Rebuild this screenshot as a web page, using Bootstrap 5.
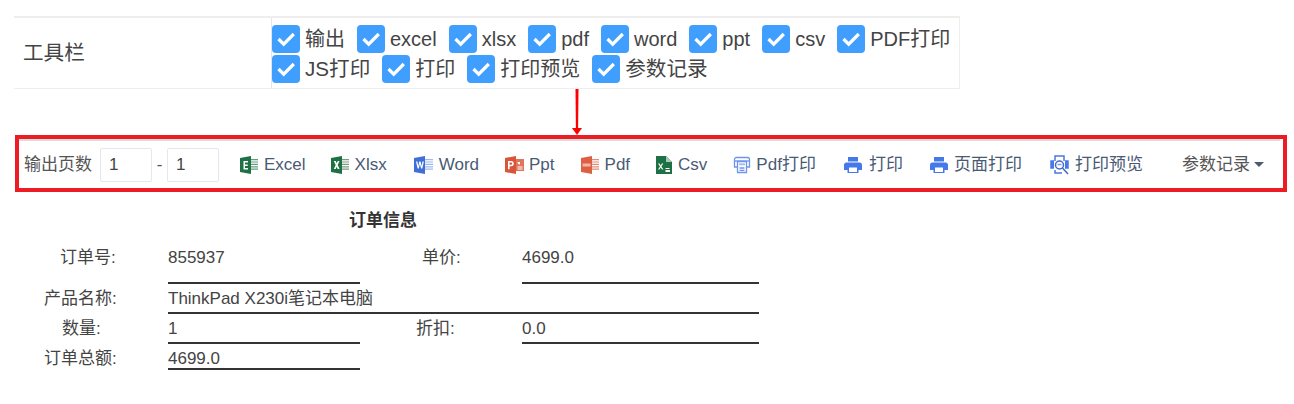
<!DOCTYPE html>
<html lang="zh">
<head>
    <meta charset="UTF-8">
    <meta name="viewport" content="width=device-width, initial-scale=1.0">
    <title>工具栏</title>
    <link href="https://cdn.jsdelivr.net/npm/bootstrap@5.3.2/dist/css/bootstrap.min.css" rel="stylesheet">
    <style>
        body {
            background: #fff;
            color: #444;
            font-family: "Liberation Sans", "Noto Sans CJK SC", sans-serif;
            overflow: hidden;
        }
        /* 上方配置表格 */
        .cfg-table {
            width: 946px;
            height: 73px;
            margin: 16px 0 0 14px;
            border-top: 2px solid #eee;
            border-bottom: 1px solid #eee;
            border-right: 1px solid #eee;
        }
        .cfg-title {
            width: 258px;
            padding-left: 9px;
            font-size: 20.6px;
            border-right: 1px solid #e6e6e6;
        }
        .cfg-checks {
            width: 687px;
            padding-top: 7px;
            row-gap: 2px;
            column-gap: 12px;
        }
        .cfg-item {
            font-size: 20px;
            line-height: 28px;
            color: #444;
            gap: 5px;
        }
        .cfg-wide { font-size: 20.6px; }
        .cfg-item .form-check-input {
            width: 28px;
            height: 28px;
            margin: 0;
            border: 0;
            border-radius: 4px;
            background-color: #409eff;
            background-image: url("data:image/svg+xml,%3csvg xmlns='http://www.w3.org/2000/svg' viewBox='0 0 28 28'%3e%3cpath fill='none' stroke='%23fff' stroke-width='3.2' d='M6.5 14l5.2 5.2L21.8 9'/%3e%3c/svg%3e");
            background-size: 100%;
        }
        .link-arrow {
            display: block;
            margin-left: 571px;
        }
        /* 红框工具条 */
        .tool-frame {
            width: 1272px;
            height: 57px;
            margin-left: 15px;
            border: 4px solid #ed1c24;
            padding-right: 3px;
        }
        .tool-bar {
            height: 49px;
            border-top: 2px solid #ddd;
            font-size: 17px;
            color: #4a5a75;
            white-space: nowrap;
            padding-left: 5px;
        }
        .page-label { color: #555; width: 76px; }
        .page-input {
            width: 52px;
            height: 34px;
            padding: 0 0 0 8px;
            font-size: 17px;
            color: #444;
            border: 1px solid #e4e7ed;
            border-radius: 2px;
        }
        .page-dash { width: 15px; text-align: center; color: #555; }
        .tool-btn { gap: 6px; }
        .tool-btn svg { flex: none; }
        .more-btn { color: #555; gap: 4px; }
        .more-caret {
            width: 0;
            height: 0;
            border-left: 5px solid transparent;
            border-right: 5px solid transparent;
            border-top: 5px solid #4a5a75;
        }
        /* 订单信息 */
        .order-title {
            font-size: 17px;
            font-weight: 700;
            color: #333;
            line-height: 22px;
            margin: 18px 0 0 349px;
        }
        .order-form {
            display: grid;
            grid-template-columns: 168px 192px 162px 237px;
            grid-template-rows: 41px 30px 30px 26px;
            font-size: 17px;
            color: #444;
            margin-top: 11px;
        }
        .order-label { line-height: 24px; padding-top: 3px; }
        .order-value {
            border-bottom: 2px solid #333;
            line-height: 24px;
            padding-top: 3px;
        }
        .order-wide { grid-column: span 3; }
        .pad-60 { padding-left: 60px; }
        .pad-44 { padding-left: 44px; }
        .pad-62 { padding-left: 62px; }
        .pad-r-62 { padding-left: 62px; }
        .pad-r-56 { padding-left: 56px; }
    </style>
</head>
<body>

<div class="cfg-table d-flex">
    <div class="cfg-title d-flex align-items-center">工具栏</div>
    <div class="cfg-checks d-flex flex-wrap align-content-start">
        <label class="cfg-item d-flex"><input class="form-check-input" type="checkbox" checked>输出</label>
        <label class="cfg-item d-flex"><input class="form-check-input" type="checkbox" checked>excel</label>
        <label class="cfg-item d-flex"><input class="form-check-input" type="checkbox" checked>xlsx</label>
        <label class="cfg-item d-flex"><input class="form-check-input" type="checkbox" checked>pdf</label>
        <label class="cfg-item d-flex"><input class="form-check-input" type="checkbox" checked>word</label>
        <label class="cfg-item d-flex"><input class="form-check-input" type="checkbox" checked>ppt</label>
        <label class="cfg-item d-flex"><input class="form-check-input" type="checkbox" checked>csv</label>
        <label class="cfg-item d-flex"><input class="form-check-input" type="checkbox" checked>PDF打印</label>
        <label class="cfg-item cfg-wide d-flex"><input class="form-check-input" type="checkbox" checked>JS打印</label>
        <label class="cfg-item d-flex"><input class="form-check-input" type="checkbox" checked>打印</label>
        <label class="cfg-item d-flex"><input class="form-check-input" type="checkbox" checked>打印预览</label>
        <label class="cfg-item cfg-wide d-flex"><input class="form-check-input" type="checkbox" checked>参数记录</label>
    </div>
</div>

<svg class="link-arrow" width="12" height="46" viewBox="0 0 12 46">
    <path d="M4.500 0h3l-.4 40h-2.200z" fill="#f00"/>
    <path d="M1 39h10l-5 7z" fill="#f00"/>
</svg>

<div class="tool-frame">
    <div class="tool-bar d-flex align-items-center">
        <span class="page-label">输出页数</span>
        <input class="page-input" value="1">
        <span class="page-dash">-</span>
        <input class="page-input" value="1">

        <span class="tool-btn d-inline-flex align-items-center" style="margin-left:21px">
            <svg width="18" height="18" viewBox="0 0 18 18">
                <path d="M0 2L11 0v18L0 16z" fill="#1e7145"/>
                <path d="M3.500 5h4.500v1.500h-3v2h2.700v1.400h-2.700v2.200h3v1.400h-4.500z" fill="#fff"/>
                <path d="M11 3h7v1.200h-7zm0 2.400h7v1.200h-7zm0 2.400h7v1.200h-7zm0 2.400h7v1.200h-7zm0 2.400h7v1.200h-7z" fill="#5f9f80"/>
            </svg>Excel</span>
        <span class="tool-btn d-inline-flex align-items-center" style="margin-left:25px">
            <svg width="18" height="18" viewBox="0 0 18 18">
                <path d="M0 2L11 0v18L0 16z" fill="#1e7145"/>
                <path d="M2.800 5h1.900l1 2.300 1-2.300h1.800L6.700 9l1.900 4.100H6.700l-1-2.400-1 2.400H2.800L4.700 9z" fill="#fff"/>
                <path d="M11 3h7v1.200h-7zm0 2.400h7v1.200h-7zm0 2.400h7v1.200h-7zm0 2.400h7v1.200h-7zm0 2.400h7v1.200h-7z" fill="#7a9a80"/>
            </svg>Xlsx</span>
        <span class="tool-btn d-inline-flex align-items-center" style="margin-left:27px">
            <svg width="19" height="18" viewBox="0 0 19 18">
                <path d="M0 2L11 0v18L0 16z" fill="#3f6fd8"/>
                <path d="M2 5.500h1.400l.9 4.500 1-4.500h1.300l1 4.500.9-4.500h1.400l-1.600 7H7.100L5.900 8l-1.100 4.500H3.600z" fill="#fff"/>
                <path d="M11 3h8v1.200h-8zm0 2.400h8v1.200h-8zm0 2.400h8v1.200h-8zm0 2.400h8v1.200h-8zm0 2.400h8v1.200h-8z" fill="#9db8ee"/>
            </svg>Word</span>
        <span class="tool-btn d-inline-flex align-items-center" style="margin-left:26px;gap:5px">
            <svg width="19" height="18" viewBox="0 0 19 18">
                <path d="M0 2L11 0v18L0 16z" fill="#d9553a"/>
                <path d="M3 5h3.200a2.300 2.300 0 0 1 0 5.200H4.600v3H3zm1.600 1.400v2.400h1.400a1.200 1.200 0 0 0 0-2.400z" fill="#fff"/>
                <path d="M11 3h8v12h-8z" fill="#e2745c"/>
                <path d="M12.500 6a2.500 2.500 0 0 0 2.500 2.500V6zM12.500 10.500h5v1h-5zm0 2h5v1h-5z" fill="#fff"/>
            </svg>Ppt</span>
        <span class="tool-btn d-inline-flex align-items-center" style="margin-left:26px">
            <svg width="18" height="18" viewBox="0 0 18 18">
                <path d="M0 2L11 0v18L0 16z" fill="#dd6045"/>
                <path d="M1.500 7.500h8v3h-8z" fill="#f3b5a5"/>
                <path d="M11 3h7v1.200h-7zm0 2.400h7v1.200h-7zm0 2.400h7v1.200h-7zm0 2.400h7v1.200h-7zm0 2.400h7v1.200h-7z" fill="#e58a74"/>
            </svg>Pdf</span>
        <span class="tool-btn d-inline-flex align-items-center" style="margin-left:25px;gap:5px">
            <svg width="18" height="18" viewBox="0 0 18 18">
                <path d="M1 0h10l6 6v12H1z" fill="#1e7145"/>
                <path d="M11 0l6 6h-6z" fill="#a9c9b5"/>
                <path d="M3 7.500h1.500l1.200 2 1.200-2h1.400l-1.900 3 2 3H7l-1.300-2.100-1.300 2.100H3l2-3z" fill="#fff"/>
                <path d="M10.500 12h4v1h-4zm0 2h4.500v2h-4.500z" fill="#fff"/>
            </svg>Csv</span>
        <span class="tool-btn d-inline-flex align-items-center" style="margin-left:26px;gap:5px">
            <svg width="18" height="18" viewBox="0 0 18 18" fill="none" stroke="#6f94ee" stroke-width="1.300">
                <path d="M4 11H1.500V3.500a2 2 0 0 1 2-2h11a2 2 0 0 1 2 2V11H14"/>
                <path d="M1.500 5h15"/>
                <path d="M4.500 5.500h9v11h-9z"/>
                <path d="M6.500 12h5M6.500 14.300h5"/>
                <path d="M6 8.300h6" stroke-width="2" stroke="#a9bdf2"/>
            </svg>Pdf打印</span>
        <span class="tool-btn d-inline-flex align-items-center" style="margin-left:28px;gap:7px">
            <svg width="18" height="16" viewBox="0 0 18 16">
                <path d="M4 0h10v4.500H4zM2.500 5.500h13A2.500 2.500 0 0 1 18 8v5h-3.500v3h-11v-3H0V8a2.500 2.500 0 0 1 2.500-2.500z" fill="#4578ea"/>
                <path d="M5 10.500h8V15H5z" fill="#fff"/>
            </svg>打印</span>
        <span class="tool-btn d-inline-flex align-items-center" style="margin-left:27px;gap:6px">
            <svg width="18" height="16" viewBox="0 0 18 16">
                <path d="M4 0h10v4.500H4zM2.500 5.500h13A2.500 2.500 0 0 1 18 8v5h-3.500v3h-11v-3H0V8a2.500 2.500 0 0 1 2.500-2.500z" fill="#4578ea"/>
                <path d="M5 10.500h8V15H5z" fill="#fff"/>
            </svg>页面打印</span>
        <span class="tool-btn d-inline-flex align-items-center" style="margin-left:28px;gap:6px">
            <svg width="19" height="20" viewBox="0 0 19 20" fill="none" stroke="#4a78e6" stroke-width="1.500">
                <path d="M5 6V1h9v5"/>
                <path d="M4 6H1v7h3M15 6h3v7h-3" fill="#4a78e6"/>
                <path d="M5 15v3h7"/>
                <circle cx="9.500" cy="10" r="4" fill="#fff" stroke="#4468c8"/>
                <path d="M7.500 9.500h4" stroke="#7f9fee"/>
                <path d="M12.500 13l5.500 6" stroke="#4468c8"/>
            </svg>打印预览</span>
        <span class="more-btn d-inline-flex align-items-center" style="margin-left:39px">参数记录<span class="more-caret"></span></span>
    </div>
</div>

<div class="order-title">订单信息</div>
<div class="order-form">
    <div class="order-label pad-60">订单号:</div>
    <div class="order-value">855937</div>
    <div class="order-label pad-r-62">单价:</div>
    <div class="order-value">4699.0</div>

    <div class="order-label pad-44">产品名称:</div>
    <div class="order-value order-wide">ThinkPad X230i笔记本电脑</div>

    <div class="order-label pad-62">数量:</div>
    <div class="order-value">1</div>
    <div class="order-label pad-r-56">折扣:</div>
    <div class="order-value">0.0</div>

    <div class="order-label pad-44">订单总额:</div>
    <div class="order-value">4699.0</div>
</div>

<script src="https://cdn.jsdelivr.net/npm/bootstrap@5.3.2/dist/js/bootstrap.bundle.min.js"></script>
</body>
</html>
